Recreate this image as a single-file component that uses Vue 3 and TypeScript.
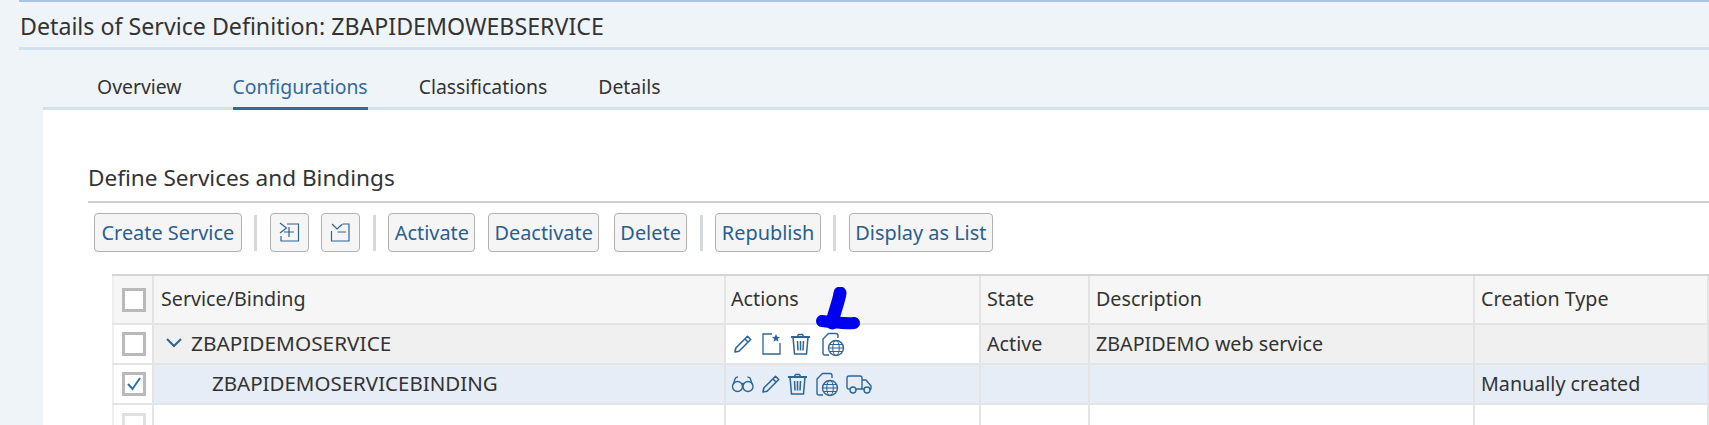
<script setup lang="ts">
const tabs = [
  { label: 'Overview', active: false },
  { label: 'Configurations', active: true },
  { label: 'Classifications', active: false },
  { label: 'Details', active: false },
]
</script>

<template>
  <div class="page">
    <header class="title">Details of Service Definition: ZBAPIDEMOWEBSERVICE</header>
    <nav class="tabs">
      <span v-for="t in tabs" :key="t.label" class="tab" :class="{ active: t.active }">{{ t.label }}</span>
    </nav>
    <main class="content">
      <h2 class="heading">Define Services and Bindings</h2>
      <div class="toolbar">
        <button class="btn wide">Create Service</button>
        <i class="sep"></i>
        <button class="btn icon">
          <svg width="21" height="21" viewBox="0 0 21 21" fill="none" stroke="#2f6594" stroke-width="1.2">
            <path d="M1 1l6.500 5L1 11M2 14v5h17.500V2H8M5 10h10M10 5v10" />
          </svg>
        </button>
        <button class="btn icon">
          <svg width="21" height="21" viewBox="0 0 21 21" fill="none" stroke="#2f6594" stroke-width="1.2">
            <path d="M2 2l5 5 5.500-5M1.500 9v10H19V2h-6M7.500 10H16" />
          </svg>
        </button>
        <i class="sep"></i>
        <button class="btn">Activate</button>
        <button class="btn">Deactivate</button>
        <button class="btn delete">Delete</button>
        <i class="sep"></i>
        <button class="btn">Republish</button>
        <i class="sep"></i>
        <button class="btn">Display as List</button>
      </div>
      <div class="table">
        <div class="row head">
          <div class="cell sel"><span class="check"></span></div>
          <div class="cell name">Service/Binding</div>
          <div class="cell">Actions</div>
          <div class="cell text">State</div>
          <div class="cell text">Description</div>
          <div class="cell text">Creation Type</div>
        </div>
        <div class="row grey">
          <div class="cell sel"><span class="check"></span></div>
          <div class="cell tree">
            <svg width="16" height="10" viewBox="0 0 16 10" fill="none" stroke="#2f6594" stroke-width="2"><path d="M1 1l7 7 7-7" /></svg>
            <span class="caps tree-label">ZBAPIDEMOSERVICE</span>
          </div>
          <div class="cell acts first">
            <svg width="20" height="20" viewBox="0 0 20 20" fill="none" stroke="#2f6594" stroke-width="1.600" stroke-linejoin="round"><path d="M2 18l.8-4L14.500 2.300l3.200 3.200L6 17.200zM12 5l3 3" /></svg>
            <svg width="19" height="22" viewBox="0 0 19 22" fill="none" stroke="#2f6594" stroke-width="1.300"><path d="M10 1H1v20h17V10" /><path d="M14 1l1.200 2.800 2.800.2-2.200 1.900.7 2.900-2.500-1.600-2.500 1.600.7-2.900L10 4l2.800-.2z" fill="#2f6594" stroke="none" /></svg>
            <svg width="21" height="22" viewBox="0 0 21 22" fill="none" stroke="#2f6594" stroke-width="1.500"><path d="M1 4h19" stroke-width="2" /><path d="M7.500 3.500L8.500 1.500h4l1 2M3 4l1.500 17h12L18 4M7.500 8l.5 9.500M10.500 8v9.500M13.500 8l-.5 9.500" /></svg>
            <svg class="globe" width="25" height="25" viewBox="0 0 25 25" fill="none" stroke="#2f6594" stroke-width="1.400"><path d="M8 23H4q-2 0-2-2V7l5.500-5.500H15q2 0 2 2V6" /><circle cx="15" cy="16" r="7.500" /><ellipse cx="15" cy="16" rx="3.300" ry="7.500" stroke-width="1" /><path d="M7.500 16h15M8.500 12.500h13M8.500 19.500h13" stroke-width="1" /></svg>
          </div>
          <div class="cell text">Active</div>
          <div class="cell text">ZBAPIDEMO web service</div>
          <div class="cell text"></div>
        </div>
        <div class="row blue">
          <div class="cell sel"><span class="check"><svg width="18" height="18" viewBox="0 0 18 18" fill="none" stroke="#2f6fb0" stroke-width="2"><path d="M3 9l4.500 5L15 3" /></svg></span></div>
          <div class="cell leaf caps">ZBAPIDEMOSERVICEBINDING</div>
          <div class="cell acts second">
            <svg width="23" height="18" viewBox="0 0 23 18" fill="none" stroke="#2f6594" stroke-width="1.400"><circle cx="6.500" cy="11.500" r="5" /><circle cx="17" cy="11.500" r="5" /><path d="M10.500 9c.7-.8 1.800-.8 2.500 0M2.500 9L4 4q.5-2 3-2M21 9l-1.500-5q-.5-2-3-2" /></svg>
            <svg width="20" height="20" viewBox="0 0 20 20" fill="none" stroke="#2f6594" stroke-width="1.600" stroke-linejoin="round"><path d="M2 18l.8-4L14.500 2.300l3.200 3.200L6 17.200zM12 5l3 3" /></svg>
            <svg width="21" height="22" viewBox="0 0 21 22" fill="none" stroke="#2f6594" stroke-width="1.500"><path d="M1 4h19" stroke-width="2" /><path d="M7.500 3.500L8.500 1.500h4l1 2M3 4l1.500 17h12L18 4M7.500 8l.5 9.500M10.500 8v9.500M13.500 8l-.5 9.500" /></svg>
            <svg width="25" height="25" viewBox="0 0 25 25" fill="none" stroke="#2f6594" stroke-width="1.400"><path d="M8 23H4q-2 0-2-2V7l5.500-5.500H15q2 0 2 2V6" /><circle cx="15" cy="16" r="7.500" /><ellipse cx="15" cy="16" rx="3.300" ry="7.500" stroke-width="1" /><path d="M7.500 16h15M8.500 12.500h13M8.500 19.500h13" stroke-width="1" /></svg>
            <svg width="26" height="19" viewBox="0 0 26 19" fill="none" stroke="#2f6594" stroke-width="1.400" stroke-linejoin="round"><path d="M3.500 14H3q-2 0-2-2V3q0-2 2-2h11q2 0 2 2v11h-4M16 5h4l5 6v3h-1.500M10 14h8.500" /><circle cx="7" cy="15" r="3" /><circle cx="21" cy="15" r="3" /></svg>
          </div>
          <div class="cell text"></div>
          <div class="cell text"></div>
          <div class="cell text">Manually created</div>
        </div>
        <div class="row empty">
          <div class="cell sel"><span class="check faint"></span></div>
          <div class="cell"></div>
          <div class="cell"></div>
          <div class="cell"></div>
          <div class="cell"></div>
          <div class="cell"></div>
        </div>
      </div>
    </main>
    <svg class="scribble" width="50" height="50" viewBox="0 0 50 50" fill="none" stroke="#0000f0" stroke-linecap="round" stroke-linejoin="round">
      <path d="M25 6c-1 8-6 20-8 30" stroke-width="13" />
      <path d="M7 34c12 1 24 3 32 2" stroke-width="12" />
    </svg>
  </div>
</template>

<style>
html, body { margin: 0; background: #eff4f9; }
</style>

<style scoped>
.page {
  position: relative;
  width: 1709px;
  height: 425px;
  overflow: hidden;
  background: #eff4f9;
  font-family: "Noto Sans", "Open Sans", sans-serif;
  color: #333;
}
.title {
  box-sizing: border-box;
  height: 50px;
  margin-left: 19px;
  padding: 10px 0 0 1px;
  border-top: 2px solid #a9c4e0;
  border-bottom: 3px solid #d3e1ef;
  font-size: 23.200px;
  line-height: 28px;
}
.tabs {
  box-sizing: border-box;
  display: flex;
  gap: 51px;
  height: 60px;
  margin-left: 43px;
  padding: 19px 0 0 54px;
  border-bottom: 3px solid #d3e1ef;
  font-size: 19.400px;
  line-height: 36px;
}
.tab { height: 41px; box-sizing: border-box; }
.tab.active {
  color: #34699a;
  border-bottom: 3px solid #34699a;
}
.content {
  box-sizing: border-box;
  height: 315px;
  margin-left: 43px;
  padding: 0 0 0 45px;
  background: #fff;
}
.heading {
  box-sizing: border-box;
  height: 93px;
  margin: 0;
  padding-top: 53px;
  border-bottom: 2px solid #d0d0d0;
  font-size: 22.600px;
  font-weight: 400;
  line-height: 30px;
}
.toolbar {
  display: flex;
  align-items: center;
  height: 39px;
  margin: 10px 0 0 6px;
  gap: 12.500px;
}
.btn {
  box-sizing: border-box;
  height: 39px;
  padding: 0 5.500px;
  border: 1.500px solid #b0b0b0;
  border-radius: 4px;
  background: #f5f5f5;
  color: #2b5f8e;
  font: 19.900px "Noto Sans", "Open Sans", sans-serif;
  white-space: nowrap;
}
.btn.wide { padding: 0 6.500px; }
.btn.delete { margin-left: 2px; }
.btn.icon {
  display: flex;
  align-items: center;
  justify-content: center;
  width: 39px;
  padding: 0;
}
.sep {
  width: 3px;
  height: 36px;
  background: #d5d9de;
}
.table {
  margin: 22px 0 0 24px;
  border-top: 2px solid #d4d4d4;
  font-size: 19.700px;
}
.row {
  display: grid;
  grid-template-columns: 42px 572px 255px 109px 385px 1fr;
  height: 40px;
  border-bottom: 2px solid #e4e4e4;
  box-sizing: border-box;
}
.head { height: 49px; background: #f6f6f6; }
.grey { background: #f0f0f0; }
.blue { background: #e6edf6; }
.empty { background: #fff; border-bottom: 0; }
.cell {
  display: flex;
  align-items: center;
  padding-left: 5px;
  padding-bottom: 2px;
  border-right: 2px solid #e4e4e4;
  box-sizing: border-box;
  white-space: nowrap;
  min-width: 0;
}
.text { padding-left: 6px; }
.sel { padding-left: 8px; padding-bottom: 0; border-left: 2px solid #eee; background: #fff; }
.head .sel { background: #f6f6f6; }
.name { padding-left: 7px; }
.caps { font-size: 20.500px; }
.tree { padding-left: 12px; gap: 9px; }
.tree-label { font-size: 20.800px; }
.leaf { padding-left: 58px; }
.acts { padding-bottom: 0; }
.first { background: #fff; padding-left: 7px; gap: 9px; }
.first .globe { margin-left: 1px; }
.second { padding-left: 5px; gap: 6.500px; }
.check {
  box-sizing: border-box;
  display: flex;
  align-items: center;
  justify-content: center;
  width: 24px;
  height: 24px;
  border: 3px solid #bababa;
  background: #fff;
}
.check.faint { border-color: #e0e0e0; }
.scribble {
  position: absolute;
  left: 815px;
  top: 287px;
}
</style>
